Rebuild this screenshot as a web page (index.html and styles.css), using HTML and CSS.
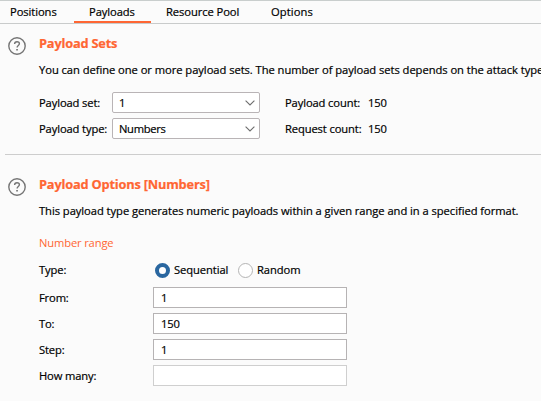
FILE: index.html
```html
<!DOCTYPE html>
<html lang="en">
<head>
<meta charset="utf-8">
<title>Payloads</title>
<link rel="stylesheet" href="styles.css">
</head>
<body>
<nav class="tabs">
  <span class="tab tab-positions">Positions</span>
  <span class="tab tab-payloads active">Payloads</span>
  <span class="tab tab-pool">Resource Pool</span>
  <span class="tab tab-options">Options</span>
</nav>
<section class="section sets">
  <svg class="help" viewBox="0 0 18 18"><circle cx="9" cy="9" r="8.2"/><path d="M6.6 7.1C6.6 5.6 7.6 4.7 9 4.7s2.4.8 2.4 2.1c0 1.6-2.3 1.8-2.3 3.6"/><path d="M8.2 12.7h1.7"/></svg>
  <div class="content">
    <h2>Payload Sets</h2>
    <p class="desc">You can define one or more payload sets. The number of payload sets depends on the attack type</p>
    <div class="set-grid">
      <label>Payload set:</label>
      <div class="select"><span>1</span><svg viewBox="0 0 10 6"><path d="M.6.6 5 5 9.4.6"/></svg></div>
      <span>Payload count:</span><span>150</span>
      <label>Payload type:</label>
      <div class="select"><span>Numbers</span><svg viewBox="0 0 10 6"><path d="M.6.6 5 5 9.4.6"/></svg></div>
      <span>Request count:</span><span>150</span>
    </div>
  </div>
</section>
<hr>
<section class="section options">
  <svg class="help" viewBox="0 0 18 18"><circle cx="9" cy="9" r="8.2"/><path d="M6.6 7.1C6.6 5.6 7.6 4.7 9 4.7s2.4.8 2.4 2.1c0 1.6-2.3 1.8-2.3 3.6"/><path d="M8.2 12.7h1.7"/></svg>
  <div class="content">
    <h2>Payload Options [Numbers]</h2>
    <p class="desc">This payload type generates numeric payloads within a given range and in a specified format.</p>
    <h3>Number range</h3>
    <div class="type-row">
      <span class="type-label">Type:</span>
      <i class="radio checked"></i><span class="seq">Sequential</span>
      <i class="radio"></i><span>Random</span>
    </div>
    <div class="fields">
      <label>From:</label><div class="input">1</div>
      <label>To:</label><div class="input">150</div>
      <label>Step:</label><div class="input">1</div>
      <label>How many:</label><div class="input disabled"></div>
    </div>
  </div>
</section>
</body>
</html>
```
FILE: styles.css
```css
* { box-sizing: border-box; }
body {
  margin: 0;
  width: 541px;
  height: 401px;
  overflow: hidden;
  background: #fbfbfb;
  color: #000;
  font: 11.2px/16px "Open Sans", "Noto Sans", sans-serif;
  letter-spacing: -0.08px;
  -webkit-text-stroke: 0.2px currentColor;
}
h2, h3, p { margin: 0; white-space: nowrap; }
.tabs {
  display: flex;
  height: 24px;
  border-top: 1px solid #c9cecd;
  border-bottom: 1px solid #c9cbcb;
}
.tab { padding-top: 3px; white-space: nowrap; }
.tab-positions { width: 74px; padding-left: 10px; }
.tab-payloads { width: 77px; padding-left: 15px; }
.tab-pool { width: 105px; padding-left: 15px; }
.tab-options { padding-left: 15px; letter-spacing: 0.1px; }
.active { height: 22px; border-bottom: 2px solid #ff6633; }
.section { display: flex; padding-left: 8px; }
.sets { height: 130px; padding-top: 12px; }
.options { padding-top: 22px; }
.help { width: 18px; height: 18px; margin: 1px 13px 0 0; flex: none; fill: none; stroke: #757575; stroke-width: 1.4; }
h2 { color: #ff6633; font-size: 12.8px; line-height: 16px; font-weight: 700; letter-spacing: -0.19px; margin-top: -1px; }
h3 { color: #ff6633; font-size: 11.2px; line-height: 16px; font-weight: 400; margin-top: 16px; letter-spacing: -0.15px; -webkit-text-stroke: 0; }
.desc { margin-top: 11px; letter-spacing: -0.05px; }
.set-grid {
  display: grid;
  grid-template-columns: 73px 173px 83px auto;
  grid-auto-rows: 21px;
  row-gap: 5px;
  align-items: center;
  margin-top: 14px;
  white-space: nowrap;
  letter-spacing: -0.12px;
}
.select {
  display: flex;
  align-items: center;
  justify-content: space-between;
  width: 148px;
  height: 21px;
  padding: 0 4px 0 6px;
  background: #fff;
  border: 1px solid #b9b4b6;
  border-radius: 2px;
  letter-spacing: -0.3px;
}
.select svg { width: 10px; height: 6px; fill: none; stroke: #6e6e6e; stroke-width: 1.1; }
hr { margin: 0 0 0 5px; border: 0; height: 1px; background: #cdcdcd; }
.type-row { display: flex; align-items: center; height: 16px; margin-top: 11px; }
.type-label { width: 116px; }
.radio { width: 15px; height: 15px; margin-right: 4px; border: 1px solid #b4b4b4; border-radius: 50%; background: #fff; }
.checked { border: 4px solid #2a67a0; }
.seq { width: 64px; }
.fields {
  display: grid;
  grid-template-columns: 114px 194px;
  grid-auto-rows: 21px;
  row-gap: 5px;
  align-items: center;
  margin-top: 9px;
  letter-spacing: -0.15px;
}
.input { height: 21px; padding: 2px 7px; background: #fff; border: 1px solid #b6b3b4; }
.disabled { border-color: #cfcfcf; }
```
